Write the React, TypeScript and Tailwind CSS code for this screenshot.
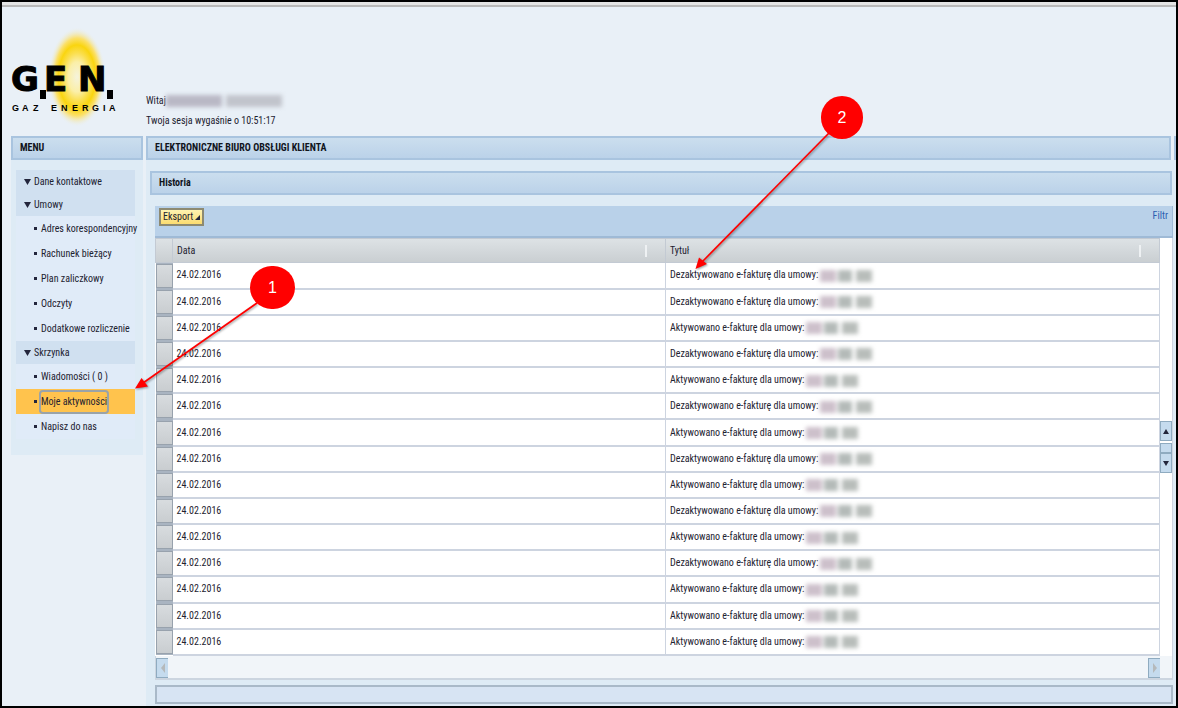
import clsx from "clsx";

type MenuItem = { label: string; level: "group" | "item"; active?: boolean };

const MENU: MenuItem[] = [
  { label: "Dane kontaktowe", level: "group" },
  { label: "Umowy", level: "group" },
  { label: "Adres korespondencyjny", level: "item" },
  { label: "Rachunek bieżący", level: "item" },
  { label: "Plan zaliczkowy", level: "item" },
  { label: "Odczyty", level: "item" },
  { label: "Dodatkowe rozliczenie", level: "item" },
  { label: "Skrzynka", level: "group" },
  { label: "Wiadomości ( 0 )", level: "item" },
  { label: "Moje aktywności", level: "item", active: true },
  { label: "Napisz do nas", level: "item" },
];

const OFF = "Dezaktywowano e-fakturę dla umowy:";
const ON = "Aktywowano e-fakturę dla umowy:";

const ROWS = [OFF, OFF, ON, OFF, ON, OFF, ON, OFF, ON, OFF, ON, OFF, ON, ON, ON].map((title, i) => ({
  id: i + 1,
  date: "24.02.2016",
  title,
}));

function Logo() {
  return (
    <svg width="110" height="105" viewBox="8 26 110 105" role="img" aria-label="GEN Gaz Energia">
      <defs>
        <radialGradient id="sun">
          <stop offset="0" stopColor="#f5f3dc" />
          <stop offset="0.3" stopColor="#fbefa8" />
          <stop offset="0.48" stopColor="#fbdf50" />
          <stop offset="0.64" stopColor="#fad50f" />
          <stop offset="0.78" stopColor="#fbe06c" />
          <stop offset="1" stopColor="#e9f0f7" stopOpacity="0" />
        </radialGradient>
      </defs>
      <ellipse cx="77" cy="77" rx="29" ry="50" fill="url(#sun)" />
      <g fontFamily="'DejaVu Sans', sans-serif" fontWeight="700" fontSize="34" stroke="#000" strokeWidth="1">
        <text x="11" y="91">G</text>
        <text x="44" y="91">E</text>
        <text x="78" y="91">N</text>
      </g>
      <path d="M40 90h6v9h-6zM107 90h6v9h-6z" />
      <g fontFamily="'Liberation Sans', sans-serif" fontWeight="700" fontSize="9">
        <text x="12 22 33 51 61 72 82 92 103 109" y="111">GAZENERGIA</text>
      </g>
    </svg>
  );
}

function TitleBar({ children, className }: { children: string; className?: string }) {
  return (
    <h2
      className={clsx(
        "flex h-6 items-center border-2 border-[#a9c4df] bg-linear-to-b from-[#cbdeee] to-[#bbd2e9] px-[7px] font-bold text-[#10141c]",
        className,
      )}
    >
      {children}
    </h2>
  );
}

function SideMenu() {
  return (
    <nav className="w-[132px] shrink-0" aria-label="Menu">
      <TitleBar>MENU</TitleBar>
      <ul className="bg-[#deebf5] pt-[10px] pr-2 pb-4 pl-[5px]">
        {MENU.map((item) => (
          <li
            key={item.label}
            className={clsx(
              "flex items-center",
              item.level === "group" ? "h-[23px] bg-[#d0e0f0] pl-2" : "h-[25px] pl-[18px]",
              item.level === "item" && (item.active ? "bg-[#ffc34d]" : "bg-[#e0ebf8]"),
            )}
          >
            {item.level === "group" ? (
              <svg width="7" height="6" viewBox="0 0 7 6" className="mr-[3px] shrink-0" aria-hidden="true">
                <path d="M0 0h7L3.500 6z" fill="#23263c" />
              </svg>
            ) : (
              <span className="mr-1 h-[3px] w-[3px] shrink-0 bg-[#23263c]" />
            )}
            <a
              href="#"
              className={clsx(
                "whitespace-nowrap leading-5",
                item.active && "rounded-xs outline-2 outline-[#9aa3a8]",
              )}
            >
              {item.label}
            </a>
          </li>
        ))}
      </ul>
    </nav>
  );
}

function HiddenNumber() {
  return (
    <span className="ml-[2px] inline-flex gap-[2px] align-middle blur-[2px]" aria-hidden="true">
      <span className="h-3 w-4 bg-[#cdc0cb]" />
      <span className="h-3 w-[14px] bg-[#b4bab8]" />
      <span className="ml-[2px] h-3 w-4 bg-[#b8bdba]" />
    </span>
  );
}

function HistoryTable() {
  return (
    <table className="h-[418px] flex-1 border-collapse bg-white text-left">
      <thead>
        <tr className="h-6 bg-linear-to-b from-[#dde2e5] to-[#c9ced1]">
          <th className="w-[17px] border border-[#c3cad3] p-0" aria-label="Wybór" />
          <th className="w-[493px] border-y border-r border-[#c3cad3] py-0 pr-[18px] pl-1 font-normal">
            <span className="flex h-3 items-center justify-between border-r-2 border-[#eef1f3]">Data</span>
          </th>
          <th className="border-y border-r border-[#c3cad3] py-0 pr-[18px] pl-1 font-normal">
            <span className="flex h-3 items-center justify-between border-r-2 border-[#eef1f3]">Tytuł</span>
          </th>
        </tr>
      </thead>
      <tbody>
        {ROWS.map((row) => (
          <tr key={row.id}>
            <td className="h-[26px] bg-[#a9b4c1] p-0">
              <button
                type="button"
                aria-label={`Zaznacz wiersz ${row.id}`}
                className="block h-6 w-full border border-[#98a2ad] bg-linear-to-b from-[#d8dcdf] to-[#c9cdd0]"
              />
            </td>
            <td className="border-r border-b-2 border-[#cdd4e0] p-0 pl-1">{row.date}</td>
            <td className="border-r border-b-2 border-[#cdd4e0] p-0 pl-1 whitespace-nowrap">
              {row.title}
              <HiddenNumber />
            </td>
          </tr>
        ))}
      </tbody>
    </table>
  );
}

function VerticalScroll() {
  return (
    <div className="flex w-[13px] flex-col items-center justify-center border-r border-[#cdd4e0] bg-white">
      <button type="button" aria-label="W górę" className="flex h-5 w-3 items-center justify-center border border-[#8fabc0] bg-[#c5dbee]">
        <svg width="6" height="5" viewBox="0 0 6 5">
          <path d="M0 5h6L3 0z" fill="#23263c" />
        </svg>
      </button>
      <span className="mt-[2px] h-[10px] w-3 border border-[#8fabc0] bg-[#c5dbee]" />
      <button type="button" aria-label="W dół" className="flex h-5 w-3 items-center justify-center border border-[#8fabc0] bg-[#c5dbee]">
        <svg width="6" height="5" viewBox="0 0 6 5">
          <path d="M0 0h6L3 5z" fill="#23263c" />
        </svg>
      </button>
    </div>
  );
}

function HorizontalScroll() {
  return (
    <div className="flex h-6 items-start justify-between border-r border-b-2 border-l border-[#ccd5e0] bg-[#f1f5f9] pt-[2px] pr-3">
      <button type="button" aria-label="W lewo" className="flex h-5 w-3 items-center justify-center border border-r-0 border-[#8fabc0] bg-[#c5dbee]">
        <svg width="4" height="10" viewBox="0 0 4 10">
          <path d="M4 0v10L0 5z" fill="#b5b9bb" />
        </svg>
      </button>
      <button type="button" aria-label="W prawo" className="flex h-5 w-3 items-center justify-center border border-r-0 border-[#8fabc0] bg-[#c5dbee]">
        <svg width="4" height="10" viewBox="0 0 4 10">
          <path d="M0 0v10l4-5z" fill="#b5b9bb" />
        </svg>
      </button>
    </div>
  );
}

// numbered hints drawn over the page
function Hints() {
  return (
    <div className="pointer-events-none absolute inset-0">
      <svg width="900" height="420" className="absolute top-0 left-0 drop-shadow-[1px_1px_1px_rgba(0,0,0,0.4)]" aria-hidden="true">
        <g stroke="#f00" strokeWidth="1.700">
          <path d="M257 303L143 383" />
          <path d="M829 133L702 262" />
        </g>
        <path d="M135 388.500L141.500 378L148 386.500zM695.500 269L699 257.500L707 264z" fill="#f00" />
      </svg>
      <span className="absolute top-[266px] left-[250px] flex h-[43px] w-[45px] items-center justify-center rounded-full bg-[#f00] text-base text-white font-['Liberation_Sans',sans-serif]">
        1
      </span>
      <span className="absolute top-[96px] left-[821px] flex h-[43px] w-[42px] items-center justify-center rounded-full bg-[#f00] text-base text-white font-['Liberation_Sans',sans-serif]">
        2
      </span>
    </div>
  );
}

export default function App() {
  return (
    <div className="relative min-h-screen bg-black p-[2px] text-[10px] leading-4 text-[#1d2230] font-['Roboto_Condensed','Liberation_Sans',sans-serif]">
      <div className="overflow-hidden bg-[#e9f0f7]">
        <div className="h-[5px] border-b-2 border-[#b9b9b9] bg-[#e4e4e4]" />
        <header className="flex h-[129px] items-end pb-[5px] pl-[6px]">
          <Logo />
          <div className="ml-7 leading-5">
            <p className="flex items-center">
              Witaj
              <span className="flex items-center blur-[2px]" aria-hidden="true">
                <span className="h-3 w-14 bg-[#b9b8c5]" />
                <span className="ml-1 h-3 w-14 bg-[#c1c4cc]" />
              </span>
            </p>
            <p>Twoja sesja wygaśnie o 10:51:17</p>
          </div>
        </header>

        <div className="flex items-start pl-[9px]">
          <SideMenu />
          <main className="ml-[3px] min-w-0 flex-1 bg-[#deebf5]">
            <div className="flex justify-between gap-[3px] bg-[#e9f0f7]">
              <TitleBar className="flex-1">ELEKTRONICZNE BIURO OBSŁUGI KLIENTA</TitleBar>
              <div className="w-[2px] bg-[#a9c4df]" />
            </div>
            <div className="pt-[11px] pr-1 pb-1 pl-1">
              <TitleBar>Historia</TitleBar>
            </div>
            <section className="mt-[7px] mr-[3px] ml-[9px]">
              <div className="flex h-8 items-start justify-between border-r border-b-2 border-[#9fbad6] bg-[#b9d1e9] pt-[2px] pr-1 pl-1">
                <button
                  type="button"
                  className="flex h-[18px] items-center gap-[2px] border-2 border-[#8d8a72] bg-linear-to-b from-[#fff3b0] to-[#fbdc70] px-[2px]"
                >
                  Eksport
                  <svg width="5" height="5" viewBox="0 0 5 5" aria-hidden="true">
                    <path d="M5 0v5H0z" fill="#23263c" />
                  </svg>
                </button>
                <a href="#" className="text-[#2a5db0]">
                  Filtr
                </a>
              </div>
              <div className="flex">
                <HistoryTable />
                <VerticalScroll />
              </div>
              <HorizontalScroll />
              <div className="mt-[5px] mb-[2px] h-[19px] border-2 border-[#a9b9c8] bg-[#d7e4f3]" />
            </section>
          </main>
        </div>
      </div>
      <Hints />
    </div>
  );
}
